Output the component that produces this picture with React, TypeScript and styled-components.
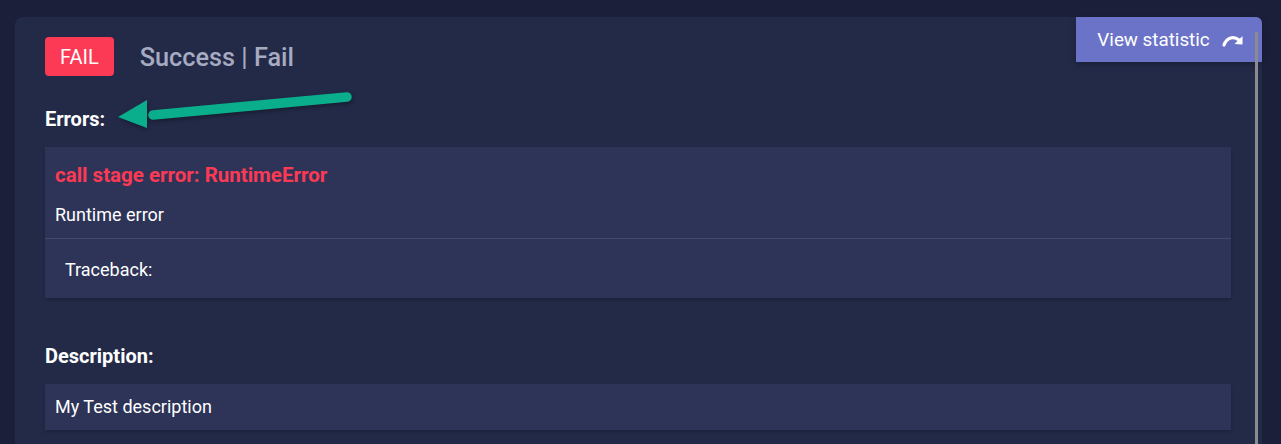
import React, { FC } from "react";
import styled, { createGlobalStyle } from "styled-components";

const GlobalStyle = createGlobalStyle`
  html, body {
    margin: 0;
    padding: 0;
    background: #1c1f3a;
    font-family: Roboto, "Liberation Sans", Arial, sans-serif;
    color: #ffffff;
  }
`;

const Page = styled.div`
  padding: 17px 19px 0 15px;
  height: 444px;
  box-sizing: border-box;
  overflow: hidden;
`;

const Card = styled.div`
  position: relative;
  background: #232a48;
  border-radius: 8px 6px 0 0;
  padding: 20px 30px 40px 30px;
  min-height: 460px;
  box-sizing: border-box;
`;

const Header = styled.div`
  display: flex;
  align-items: center;
  gap: 26px;
  height: 39px;
`;

const Badge = styled.span<{ $color: string }>`
  display: inline-flex;
  align-items: center;
  justify-content: center;
  height: 39px;
  padding: 0 15px;
  border-radius: 4px;
  background: ${(p) => p.$color};
  color: #fff;
  font-size: 20px;
  box-sizing: border-box;
`;

const Title = styled.span`
  font-size: 25.3px;
  font-weight: 500;
  color: #a7abc2;
  margin-top: 1px;
`;

const StatButton = styled.button`
  position: absolute;
  top: 0;
  right: 0;
  width: 186px;
  height: 45px;
  border: none;
  border-radius: 0 6px 0 0;
  background: #6b73c8;
  color: #fff;
  font-family: inherit;
  font-size: 18.8px;
  display: flex;
  align-items: center;
  justify-content: center;
  gap: 12px;
  padding: 1px 0 0 3px;
  box-shadow: 0 3px 6px rgba(0, 0, 0, 0.25);
`;

const ScrollThumb = styled.div`
  position: absolute;
  top: 15px;
  right: 4px;
  width: 3px;
  bottom: 0;
  background: #8a8a8f;
`;

const SectionLabel = styled.div<{ $top: number }>`
  margin-top: ${(p) => p.$top}px;
  font-size: 20px;
  font-weight: 700;
  line-height: 24px;
`;

const Panel = styled.div`
  margin-top: 16px;
  margin-right: 1px;
  background: #2d3457;
  box-shadow: 0 2px 3px rgba(0, 0, 0, 0.2);
`;

const ErrorHead = styled.div`
  padding: 16px 10px 0 10px;
`;

const ErrorTitle = styled.div`
  color: #fc3a55;
  font-size: 20.5px;
  font-weight: 700;
  line-height: 24px;
`;

const ErrorText = styled.div`
  margin-top: 17px;
  padding-bottom: 12px;
  font-size: 18px;
  line-height: 22px;
`;

const Divider = styled.div`
  height: 1px;
  background: #424a6a;
`;

const Traceback = styled.div`
  padding: 20px 20px 0;
  font-size: 18px;
  line-height: 22px;
  height: 59px;
  box-sizing: border-box;
`;

const DescText = styled.div`
  padding: 12px 10px;
  font-size: 18px;
  line-height: 22px;
`;

const Arrow = styled.svg`
  position: absolute;
  left: 88px;
  top: 75px;
  filter: drop-shadow(1px 2px 2px rgba(0, 0, 0, 0.35));
`;

const RedoIcon: FC = () => (
  <svg width="22" height="14" viewBox="0 0 22 14">
    <path
      d="M2 12 C5 4 12 3 17 7"
      stroke="#fff"
      strokeWidth="3.2"
      fill="none"
      strokeLinecap="round"
    />
    <path d="M20.5 3 L20.5 11.5 L12.5 11 Z" fill="#fff" />
  </svg>
);

const App: FC = () => (
  <>
    <GlobalStyle />
    <Page>
      <Card>
        <Header>
          <Badge $color="#fc3a55">FAIL</Badge>
          <Title>Success | Fail</Title>
        </Header>
        <SectionLabel $top={31}>Errors:</SectionLabel>
        <Panel>
          <ErrorHead>
            <ErrorTitle>call stage error: RuntimeError</ErrorTitle>
            <ErrorText>Runtime error</ErrorText>
          </ErrorHead>
          <Divider />
          <Traceback>Traceback:</Traceback>
        </Panel>
        <SectionLabel $top={46}>Description:</SectionLabel>
        <Panel>
          <DescText>My Test description</DescText>
        </Panel>
        <StatButton>
          View statistic
          <RedoIcon />
        </StatButton>
        <ScrollThumb />
        <Arrow width="280" height="70" viewBox="0 0 280 70">
          <line
            x1="244"
            y1="5"
            x2="50"
            y2="23"
            stroke="#0aae8c"
            strokeWidth="9.5"
            strokeLinecap="round"
          />
          <polygon points="15,25 44,8 44,36" fill="#0aae8c" />
        </Arrow>
      </Card>
    </Page>
  </>
);

export default App;
